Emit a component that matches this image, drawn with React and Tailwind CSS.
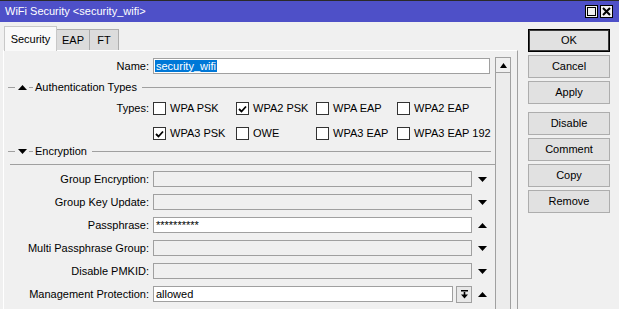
import React from 'react'

const font = { fontFamily: '"Liberation Sans", Arial, sans-serif' }

const Tri = ({ up }) => (
  <svg width="9" height="5" viewBox="0 0 9 5" className="block">
    {up ? <polygon points="0,5 9,5 4.5,0" fill="#000" /> : <polygon points="0,0 9,0 4.5,5" fill="#000" />}
  </svg>
)

const Check = ({ checked, label, w }) => (
  <div className={`flex items-center ${w}`}>
    <div className="w-[13px] h-[13px] bg-white border border-[#333] flex items-center justify-center shrink-0">
      {checked && (
        <svg width="9" height="8" viewBox="0 0 9 8">
          <polyline points="1,4 3.5,6.5 8,1.5" fill="none" stroke="#000" strokeWidth="1.8" />
        </svg>
      )}
    </div>
    <span className="ml-[4px] whitespace-nowrap">{label}</span>
  </div>
)

// collapsible group header: — ▲ - Title ———————
const SectionHeader = ({ title, up }) => (
  <div className="flex items-center h-[14px] pl-[4px] pr-[4px]">
    <div className="w-[7px] h-px bg-[#a0a0a0]" />
    <div className="ml-[3px]"><Tri up={up} /></div>
    <div className="w-[4px] h-px bg-[#a0a0a0] ml-[2px]" />
    <span className="ml-[2px] whitespace-nowrap">{title}</span>
    <div className="flex-1 h-px bg-[#a0a0a0] ml-[5px]" />
  </div>
)

const Field = ({ label, value, enabled, up, dropdown }) => (
  <div className="flex items-center h-[16px]">
    <div className="w-[145px] text-right whitespace-nowrap">{label}:</div>
    <div className={`ml-[4px] h-[16px] ${dropdown ? 'w-[300px]' : 'w-[319px]'} border ${enabled ? 'bg-white border-[#a0a0a0]' : 'bg-[#f0f0f0] border-[#a0a0a0]'} flex items-center px-[2px] leading-none`}>
      {value}
    </div>
    {dropdown && (
      <div className="ml-[3px] w-[16px] h-[17px] border border-[#a0a0a0] bg-[#e8e8e8] flex items-center justify-center">
        <svg width="9" height="9" viewBox="0 0 9 9">
          <rect x="1" y="0" width="7" height="1.5" fill="#000" />
          <rect x="3.7" y="2" width="1.6" height="3" fill="#000" />
          <polygon points="1,4.5 8,4.5 4.5,8.5" fill="#000" />
        </svg>
      </div>
    )}
    <div className="ml-[6px]"><Tri up={up} /></div>
  </div>
)

const Btn = ({ children, def }) => (
  <div className={`h-[23px] w-[82px] flex items-center justify-center bg-[#e1e1e1] border ${def ? 'border-black shadow-[inset_0_0_0_1px_#3a3a3a]' : 'border-[#adadad]'}`}>
    {children}
  </div>
)

export default function App() {
  return (
    <div className="w-[619px] h-[309px] bg-[#f0f0f0] overflow-hidden text-[11px] text-black" style={font}>
      {/* title bar */}
      <div className="h-[22px] bg-[#4e50c8] border-t border-[#2a2a2a] flex items-center pl-[5px] pr-[6px]">
        <span className="text-white text-[11px] flex-1 whitespace-nowrap">WiFi Security &lt;security_wifi&gt;</span>
        <div className="w-[13px] h-[13px] bg-[#f0f0f0] border border-black flex items-center justify-center">
          <div className="w-[9px] h-[9px] border border-black" />
        </div>
        <div className="ml-[2px] w-[13px] h-[13px] bg-[#f0f0f0] border border-black flex items-center justify-center">
          <svg width="9" height="9" viewBox="0 0 9 9">
            <path d="M1 1 L8 8 M8 1 L1 8" stroke="#000" strokeWidth="2" />
          </svg>
        </div>
      </div>

      <div className="flex">
        {/* left panel */}
        <div className="w-[518px] pl-[3px]">
          {/* tabs */}
          <div className="flex items-end h-[28px] pl-[1px]">
            <div className="h-[25px] w-[53px] bg-[#f9f9f9] border-t border-l border-r border-[#c8c8c8] flex items-center justify-center relative top-px z-10">Security</div>
            <div className="h-[21px] w-[33px] bg-[#dcdcdc] border-t border-r border-[#adadad] flex items-center justify-center">EAP</div>
            <div className="h-[21px] w-[29px] bg-[#dcdcdc] border-t border-r border-[#adadad] flex items-center justify-center">FT</div>
          </div>
          {/* panel */}
          <div className="h-[259px] border-t border-l border-white border-r-[#a0a0a0] border-r flex">
            <div className="w-[491px]">
              <div className="flex items-center h-[16px] mt-[7px]">
                <div className="w-[145px] text-right">Name:</div>
                <div className="ml-[4px] h-[16px] w-[337px] bg-white border border-[#a0a0a0] flex items-center px-[1px]">
                  <span className="bg-[#0078d7] text-white leading-[12px] px-[1px]">security_wifi</span>
                </div>
              </div>

              <div className="mt-[6px]"><SectionHeader title="Authentication Types" up /></div>

              <div className="flex items-center h-[13px] mt-[8px]">
                <div className="w-[145px] text-right">Types:</div>
                <div className="ml-[4px] flex">
                  <Check label="WPA PSK" w="w-[83px]" />
                  <Check label="WPA2 PSK" w="w-[80px]" checked />
                  <Check label="WPA EAP" w="w-[81px]" />
                  <Check label="WPA2 EAP" w="w-[90px]" />
                </div>
              </div>
              <div className="flex items-center h-[13px] mt-[12px]">
                <div className="w-[145px]" />
                <div className="ml-[4px] flex">
                  <Check label="WPA3 PSK" w="w-[83px]" checked />
                  <Check label="OWE" w="w-[80px]" />
                  <Check label="WPA3 EAP" w="w-[81px]" />
                  <Check label="WPA3 EAP 192" w="w-[90px]" />
                </div>
              </div>

              <div className="mt-[4px]"><SectionHeader title="Encryption" up={false} /></div>
              <div className="mt-[6px] ml-[6px] h-px bg-[#a0a0a0]" />

              <div className="mt-[6px] flex flex-col gap-[7px]">
                <Field label="Group Encryption" />
                <Field label="Group Key Update" />
                <Field label="Passphrase" value="**********" enabled up />
                <Field label="Multi Passphrase Group" />
                <Field label="Disable PMKID" />
                <Field label="Management Protection" value="allowed" enabled up dropdown />
              </div>
            </div>
            {/* scrollbar */}
            <div className="mt-[6px] w-[16px] border-l border-r border-[#a0a0a0] bg-[#ececec]">
              <div className="h-[16px] border-b border-t border-[#a0a0a0] bg-[#f0f0f0] flex items-center justify-center">
                <svg width="7" height="5" viewBox="0 0 7 5"><polygon points="0,5 7,5 3.5,0" fill="#000" /></svg>
              </div>
            </div>
          </div>
        </div>

        {/* buttons */}
        <div className="ml-[10px] pt-[7px] flex flex-col">
          <div className="flex flex-col gap-[3px]">
            <Btn def>OK</Btn>
            <Btn>Cancel</Btn>
            <Btn>Apply</Btn>
          </div>
          <div className="mt-[8px] flex flex-col gap-[3px]">
            <Btn>Disable</Btn>
            <Btn>Comment</Btn>
            <Btn>Copy</Btn>
            <Btn>Remove</Btn>
          </div>
        </div>
      </div>
    </div>
  )
}
